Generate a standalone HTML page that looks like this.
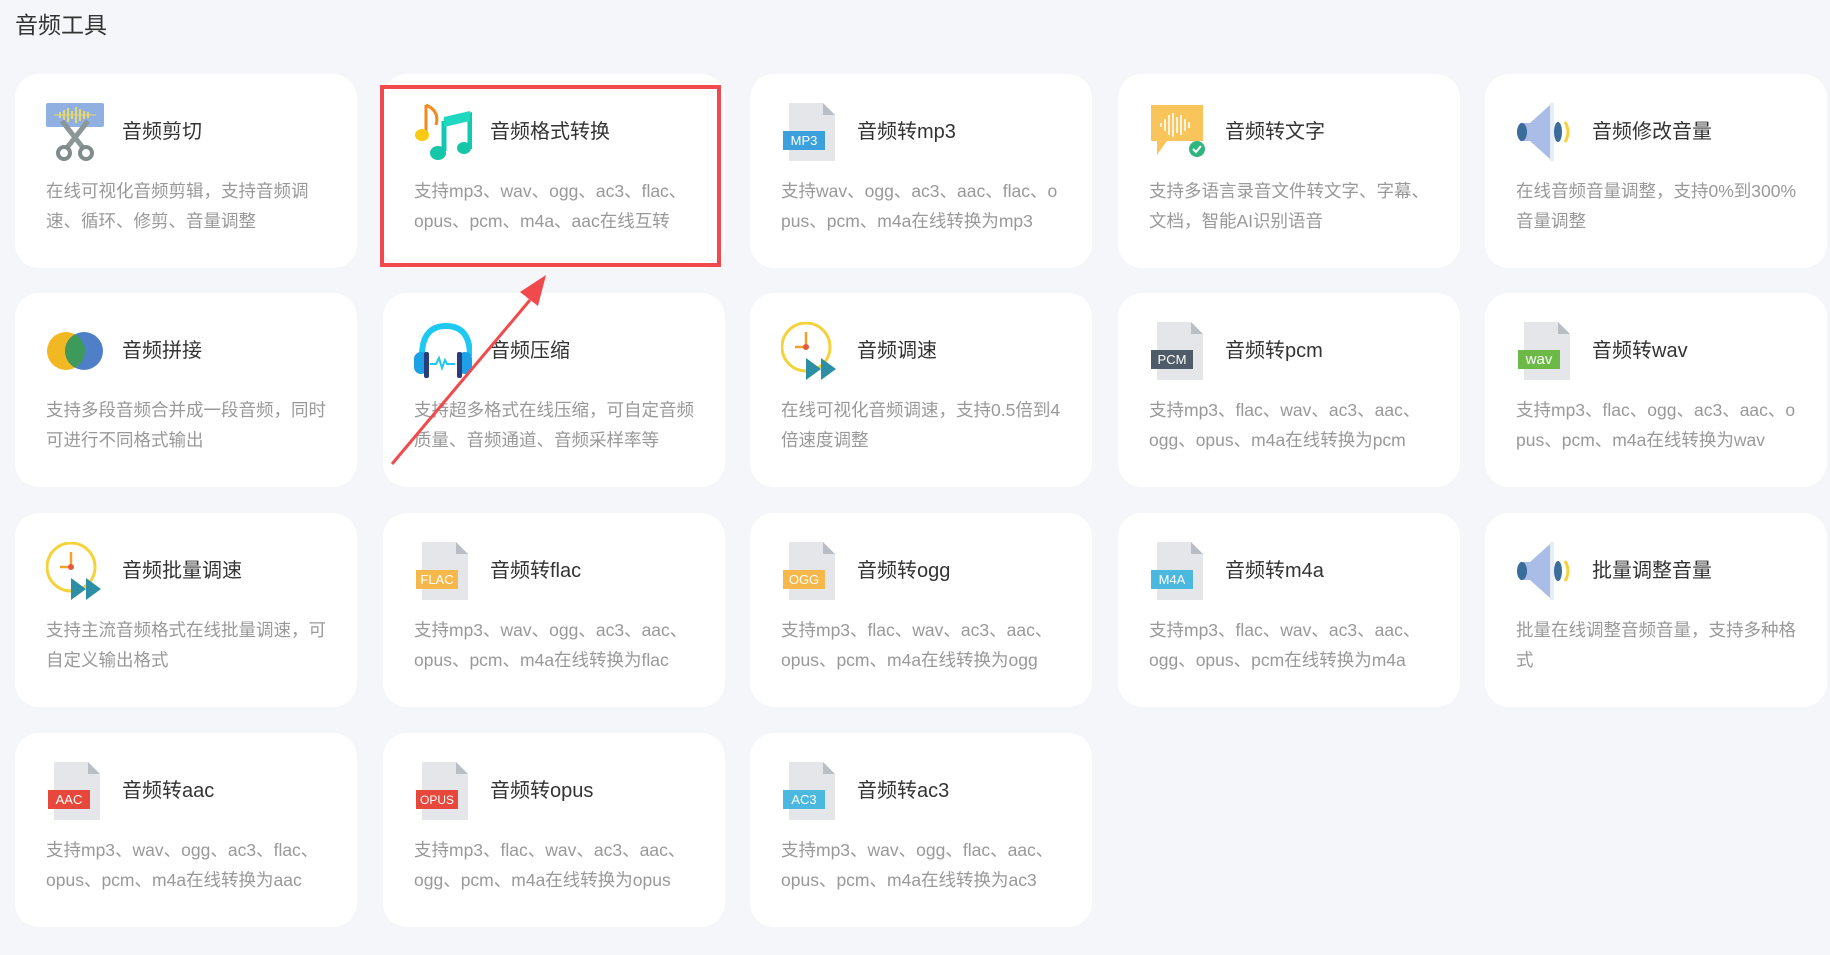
<!DOCTYPE html>
<html><head><meta charset="utf-8"><style>
*{margin:0;padding:0;box-sizing:border-box}
body{width:1830px;height:955px;background:#f5f6fa;font-family:"Liberation Sans","Noto Sans CJK SC",sans-serif;position:relative;overflow:hidden}
h1{position:absolute;left:15px;top:6px;font-size:23px;font-weight:normal;color:#333}
.c{position:absolute;width:342px;height:194px;background:#fff;border-radius:24px}
.c svg{position:absolute;left:31px;top:29px;width:58px;height:58px}
.t{position:absolute;left:107px;top:45px;font-size:20px;color:#333;line-height:26px}
.d{position:absolute;left:31px;top:103px;font-size:17.5px;color:#999;line-height:29.5px;white-space:nowrap}
.r1{top:74px}.r2{top:293px}.r3{top:513px}.r4{top:733px}
.k1{left:15px}.k2{left:383px}.k3{left:750px}.k4{left:1118px}.k5{left:1485px}
</style></head><body>
<h1>音频工具</h1>
<svg width="0" height="0" style="position:absolute"><defs>
<g id="pg"><path d="M8 0h34l12 12v46H8z" fill="#e4e6ea"/><path d="M42 0v12h12z" fill="#b9bdc4"/></g>
<g id="spk"><path d="M4 20h10l20-18v54L14 38H4z" fill="#a9bde6"/><ellipse cx="6" cy="29" rx="5" ry="9" fill="#3b6d9c"/><ellipse cx="42" cy="29" rx="4" ry="10" fill="#3b6d9c"/><path d="M49 19q6 10 0 20" stroke="#f6cf3a" stroke-width="3" fill="none"/><rect x="34" y="0" width="4" height="58" fill="#e8ecf4"/></g>
<g id="clk"><circle cx="25" cy="25" r="24" fill="#fff" stroke="#f6d23a" stroke-width="3"/><path d="M25 10v15h-11" stroke="#f0a326" stroke-width="2.5" fill="none"/><circle cx="25" cy="25" r="3" fill="#e8563c"/><path d="M25 36l15 11-15 11zM40 36l15 11-15 11z" fill="#2c8fa6"/></g>
</defs></svg>

<div class="c r1 k1"><svg viewBox="0 0 58 58"><rect x="0" y="0" width="58" height="24" rx="2" fill="#8fb0e0"/><path d="M8 12h42" stroke="#e8d86a" stroke-width="1"/><g stroke="#e8d86a" stroke-width="2"><path d="M14 9v6M18 7v10M22 5v14M26 8v8M30 4v16M34 6v12M38 8v8M42 9v6"/></g><path d="M16 18l22 28M42 18L20 46" stroke="#8a9796" stroke-width="5"/><circle cx="18" cy="50" r="6" fill="none" stroke="#7f8c8b" stroke-width="4"/><circle cx="40" cy="50" r="6" fill="none" stroke="#7f8c8b" stroke-width="4"/></svg><div class="t">音频剪切</div><div class="d">在线可视化音频剪辑，支持音频调<br>速、循环、修剪、音量调整</div></div>
<div class="c r1 k2"><svg viewBox="0 0 58 58"><path d="M12 2v28" stroke="#f28a1c" stroke-width="3"/><path d="M12 2q14 6 10 20" stroke="#f28a1c" stroke-width="3" fill="none"/><ellipse cx="8" cy="32" rx="7" ry="6" fill="#f9c913"/><path d="M30 18l26-6v34" stroke="#10c9b0" stroke-width="5" fill="none"/><path d="M30 18v30" stroke="#10c9b0" stroke-width="5"/><path d="M30 14l26-6v10l-26 6z" fill="#20d8c0"/><ellipse cx="24" cy="50" rx="8" ry="7" fill="#16c6a8"/><ellipse cx="50" cy="45" rx="7" ry="6" fill="#16c6a8"/></svg><div class="t">音频格式转换</div><div class="d">支持mp3、wav、ogg、ac3、flac、<br>opus、pcm、m4a、aac在线互转</div></div>
<div class="c r1 k3"><svg viewBox="0 0 58 58"><use href="#pg"/><rect x="2" y="28" width="42" height="19" fill="#3ca0dc"/><text x="23" y="42" font-size="13" fill="#fff" text-anchor="middle" font-family="Liberation Sans">MP3</text></svg><div class="t">音频转mp3</div><div class="d">支持wav、ogg、ac3、aac、flac、o<br>pus、pcm、m4a在线转换为mp3</div></div>
<div class="c r1 k4"><svg viewBox="0 0 58 58"><path d="M2 2h52v36H18l-10 14v-14H2z" fill="#f9c45a"/><g stroke="#fff" stroke-width="2" opacity=".8"><path d="M12 20v4M16 16v12M20 12v20M24 10v24M28 14v16M32 12v20M36 16v12M40 19v6"/></g><circle cx="48" cy="46" r="8" fill="#2fb67e"/><path d="M44 46l3 3 5-6" stroke="#fff" stroke-width="2" fill="none"/></svg><div class="t">音频转文字</div><div class="d">支持多语言录音文件转文字、字幕、<br>文档，智能AI识别语音</div></div>
<div class="c r1 k5"><svg viewBox="0 0 58 58"><use href="#spk"/></svg><div class="t">音频修改音量</div><div class="d">在线音频音量调整，支持0%到300%<br>音量调整</div></div>

<div class="c r2 k1"><svg viewBox="0 0 58 58"><circle cx="20" cy="29" r="19" fill="#f2b824"/><circle cx="38" cy="29" r="19" fill="#4f7fc6"/><path d="M29 12.3a19 19 0 0 1 0 33.4a19 19 0 0 1 0-33.4z" fill="#3e9a5a"/></svg><div class="t">音频拼接</div><div class="d">支持多段音频合并成一段音频，同时<br>可进行不同格式输出</div></div>
<div class="c r2 k2"><svg viewBox="0 0 58 58"><path d="M8 34q0-30 24-30t24 30" stroke="#1ec8f0" stroke-width="6" fill="none"/><rect x="0" y="30" width="14" height="22" rx="7" fill="#1ea0e6"/><rect x="44" y="30" width="14" height="22" rx="7" fill="#1ea0e6"/><rect x="10" y="30" width="5" height="26" rx="2" fill="#2a3d7a"/><rect x="43" y="30" width="5" height="26" rx="2" fill="#2a3d7a"/><path d="M16 42h6l3-6 3 10 3-8 2 4h8" stroke="#1ec8f0" stroke-width="2" fill="none"/></svg><div class="t">音频压缩</div><div class="d">支持超多格式在线压缩，可自定音频<br>质量、音频通道、音频采样率等</div></div>
<div class="c r2 k3"><svg viewBox="0 0 58 58"><use href="#clk"/></svg><div class="t">音频调速</div><div class="d">在线可视化音频调速，支持0.5倍到4<br>倍速度调整</div></div>
<div class="c r2 k4"><svg viewBox="0 0 58 58"><use href="#pg"/><rect x="2" y="28" width="42" height="19" fill="#4f5b69"/><text x="23" y="42" font-size="13" fill="#fff" text-anchor="middle" font-family="Liberation Sans">PCM</text></svg><div class="t">音频转pcm</div><div class="d">支持mp3、flac、wav、ac3、aac、<br>ogg、opus、m4a在线转换为pcm</div></div>
<div class="c r2 k5"><svg viewBox="0 0 58 58"><use href="#pg"/><rect x="2" y="28" width="42" height="19" fill="#6cba45"/><text x="23" y="42" font-size="15" fill="#fff" text-anchor="middle" font-family="Liberation Sans">wav</text></svg><div class="t">音频转wav</div><div class="d">支持mp3、flac、ogg、ac3、aac、o<br>pus、pcm、m4a在线转换为wav</div></div>

<div class="c r3 k1"><svg viewBox="0 0 58 58"><use href="#clk"/></svg><div class="t">音频批量调速</div><div class="d">支持主流音频格式在线批量调速，可<br>自定义输出格式</div></div>
<div class="c r3 k2"><svg viewBox="0 0 58 58"><use href="#pg"/><rect x="2" y="28" width="42" height="19" fill="#f7b84b"/><text x="23" y="42" font-size="13" fill="#fff" text-anchor="middle" font-family="Liberation Sans">FLAC</text></svg><div class="t">音频转flac</div><div class="d">支持mp3、wav、ogg、ac3、aac、<br>opus、pcm、m4a在线转换为flac</div></div>
<div class="c r3 k3"><svg viewBox="0 0 58 58"><use href="#pg"/><rect x="2" y="28" width="42" height="19" fill="#f7b84b"/><text x="23" y="42" font-size="13" fill="#fff" text-anchor="middle" font-family="Liberation Sans">OGG</text></svg><div class="t">音频转ogg</div><div class="d">支持mp3、flac、wav、ac3、aac、<br>opus、pcm、m4a在线转换为ogg</div></div>
<div class="c r3 k4"><svg viewBox="0 0 58 58"><use href="#pg"/><rect x="2" y="28" width="42" height="19" fill="#4bb8e0"/><text x="23" y="42" font-size="13" fill="#fff" text-anchor="middle" font-family="Liberation Sans">M4A</text></svg><div class="t">音频转m4a</div><div class="d">支持mp3、flac、wav、ac3、aac、<br>ogg、opus、pcm在线转换为m4a</div></div>
<div class="c r3 k5"><svg viewBox="0 0 58 58"><use href="#spk"/></svg><div class="t">批量调整音量</div><div class="d">批量在线调整音频音量，支持多种格<br>式</div></div>

<div class="c r4 k1"><svg viewBox="0 0 58 58"><use href="#pg"/><rect x="2" y="28" width="42" height="19" fill="#e8483c"/><text x="23" y="42" font-size="13" fill="#fff" text-anchor="middle" font-family="Liberation Sans">AAC</text></svg><div class="t">音频转aac</div><div class="d">支持mp3、wav、ogg、ac3、flac、<br>opus、pcm、m4a在线转换为aac</div></div>
<div class="c r4 k2"><svg viewBox="0 0 58 58"><use href="#pg"/><rect x="2" y="28" width="42" height="19" fill="#e8483c"/><text x="23" y="42" font-size="12" fill="#fff" text-anchor="middle" font-family="Liberation Sans">OPUS</text></svg><div class="t">音频转opus</div><div class="d">支持mp3、flac、wav、ac3、aac、<br>ogg、pcm、m4a在线转换为opus</div></div>
<div class="c r4 k3"><svg viewBox="0 0 58 58"><use href="#pg"/><rect x="2" y="28" width="42" height="19" fill="#4bb8e0"/><text x="23" y="42" font-size="13" fill="#fff" text-anchor="middle" font-family="Liberation Sans">AC3</text></svg><div class="t">音频转ac3</div><div class="d">支持mp3、wav、ogg、flac、aac、<br>opus、pcm、m4a在线转换为ac3</div></div>

<div style="position:absolute;left:380px;top:85px;width:341px;height:182px;border:4px solid #f04a4c"></div>
<svg style="position:absolute;left:0;top:0" width="1830" height="955"><path d="M392 464L530 300" stroke="#f04a4c" stroke-width="3"/><path d="M546 275L520 292L538 306z" fill="#f04a4c"/></svg>
</body></html>
